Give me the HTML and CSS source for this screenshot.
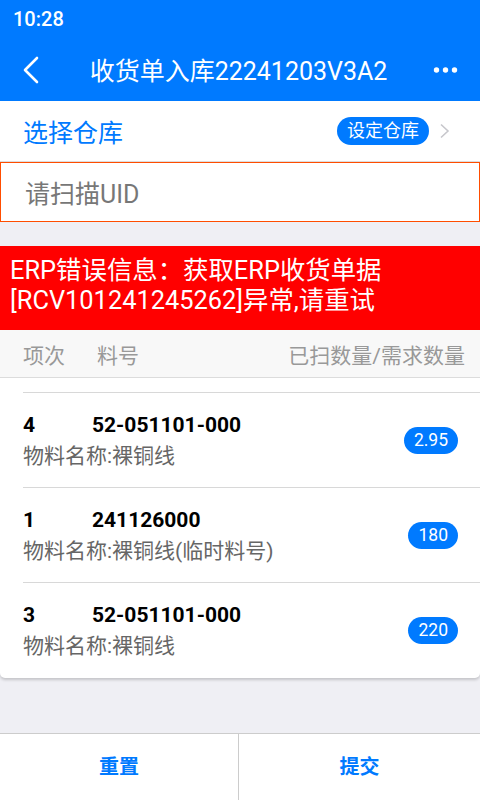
FILE: index.html
```html
<!DOCTYPE html>
<html lang="zh-CN">
<head>
  <meta charset="utf-8" />
  <meta name="viewport" content="width=device-width, initial-scale=1"/>
  <title>收货单入库</title>
  <link rel="stylesheet" href="styles.css">
</head>
<body>
  <div class="page">
    <!-- 顶部 -->
    <div class="header">
      <div class="status-bar">10:28</div>
      <div class="nav-bar">
        <svg class="nav-back" width="20" height="28" viewBox="0 0 20 28">
          <polyline points="15,2 3,14 15,26" fill="none" stroke="#fff" stroke-width="2.6" stroke-linecap="round" stroke-linejoin="round"/>
        </svg>
        <div class="nav-title">收货单入库22241203V3A2</div>
        <svg class="nav-more" width="28" height="8" viewBox="0 0 28 8">
          <circle cx="3.5" cy="4" r="2.7" fill="#fff"/>
          <circle cx="12.5" cy="4" r="2.7" fill="#fff"/>
          <circle cx="21.5" cy="4" r="2.7" fill="#fff"/>
        </svg>
      </div>
    </div>

    <!-- 仓库 -->
    <div class="warehouse-row">
      <span class="warehouse-label">选择仓库</span>
      <span class="warehouse-right">
        <span class="tag-btn">设定仓库</span>
        <svg width="12" height="16" viewBox="0 0 12 16">
          <polyline points="2,1.5 9,8 2,14.5" fill="none" stroke="#c7c7cc" stroke-width="1.6"/>
        </svg>
      </span>
    </div>

    <div class="scan-box">
      <span class="scan-placeholder">请扫描UID</span>
    </div>

    <div class="error-msg">ERP错误信息：获取ERP收货单据[RCV101241245262]异常,请重试</div>

    <!-- 列表 -->
    <div class="table-head">
      <span class="col-no">项次</span>
      <span class="col-code">料号</span>
      <span class="col-qty">已扫数量/需求数量</span>
    </div>

    <div class="list-card">
      <div class="item">
        <div class="item-info">
          <div class="item-line"><span class="item-no">4</span><span class="item-code">52-051101-000</span></div>
          <div class="item-name">物料名称:裸铜线</div>
        </div>
        <span class="qty-badge">2.95</span>
      </div>
      <div class="item">
        <div class="item-info">
          <div class="item-line"><span class="item-no">1</span><span class="item-code">241126000</span></div>
          <div class="item-name">物料名称:裸铜线(临时料号)</div>
        </div>
        <span class="qty-badge">180</span>
      </div>
      <div class="item">
        <div class="item-info">
          <div class="item-line"><span class="item-no">3</span><span class="item-code">52-051101-000</span></div>
          <div class="item-name">物料名称:裸铜线</div>
        </div>
        <span class="qty-badge">220</span>
      </div>
    </div>

    <div class="spacer"></div>

    <!-- 底部按钮 -->
    <div class="footer">
      <div class="footer-btn btn-reset">重置</div>
      <div class="footer-btn">提交</div>
    </div>
  </div>
</body>
</html>
```

FILE: styles.css
```css
* {
  box-sizing: border-box;
}
body {
  margin: 0;
  background-color: #efeff4;
  font-family: Roboto, "Noto Sans CJK SC", sans-serif;
}
.page {
  height: 800px;
  display: flex;
  flex-direction: column;
}

/* 顶部 */
.header {
  background-color: #007aff;
  color: #fff;
}
.status-bar {
  height: 36px;
  padding: 6px 0 0 13px;
  font-size: 20px;
  font-weight: 500;
  line-height: 26px;
}
.nav-bar {
  height: 65px;
  display: flex;
  align-items: center;
  padding: 0 19px 0 22px;
}
.nav-back {
  margin-top: 2px;
}
.nav-title {
  flex: 1;
  text-align: center;
  font-size: 25px;
  padding-left: 2px;
}
.nav-more {
  margin-top: 2px;
}

/* 仓库 */
.warehouse-row {
  height: 61px;
  background: #fff;
  border-bottom: 1px solid #ddd;
  display: flex;
  align-items: center;
  justify-content: space-between;
  padding: 0 29px 0 23px;
}
.warehouse-label {
  color: #007aff;
  font-size: 25px;
}
.warehouse-right {
  display: flex;
  align-items: center;
  gap: 10px;
}
.tag-btn {
  background: #007aff;
  color: #fff;
  font-size: 18px;
  line-height: 28px;
  height: 28px;
  padding: 0 10px;
  border-radius: 14px;
}
.scan-box {
  height: 60px;
  background: #fff;
  border: 1px solid #ff4d00;
  display: flex;
  align-items: center;
  padding-left: 24px;
}
.scan-placeholder {
  color: #777;
  font-size: 25px;
}
.error-msg {
  margin-top: 24px;
  background: #ff0000;
  color: #fff;
  font-size: 25.4px;
  line-height: 30px;
  height: 84px;
  padding: 9px 10px 0;
}

/* 列表 */
.table-head {
  height: 48px;
  background: #f8f8f8;
  border-bottom: 1px solid #ddd;
  display: flex;
  align-items: center;
  padding: 0 15px 0 23px;
  color: #999;
  font-size: 21px;
}
.col-no {
  width: 74px;
}
.col-code {
  flex: 1;
}
.list-card {
  background: #fff;
  padding-top: 14px;
  padding-bottom: 1px;
  border-radius: 0 0 5px 5px;
  box-shadow: 0 2px 3px rgba(0, 0, 0, 0.18);
}
.item {
  height: 95px;
  margin-left: 23px;
  border-top: 1px solid #d8d8d8;
  display: flex;
  align-items: center;
  padding: 0 22px 0 0;
}
.item-info {
  flex: 1;
}
.item-line {
  line-height: 30px;
  font-size: 21px;
  font-weight: bold;
  color: #000;
  margin-top: 1px;
}
.item-no {
  display: inline-block;
  width: 69px;
}
.item-name {
  line-height: 32px;
  font-size: 21px;
  color: #666;
}
.qty-badge {
  background: #007aff;
  color: #fff;
  font-size: 17.5px;
  height: 27px;
  line-height: 27px;
  padding: 0 10px;
  border-radius: 14px;
  min-width: 49px;
  text-align: center;
}
.spacer {
  flex: 1;
}

/* 底部按钮 */
.footer {
  height: 67px;
  display: flex;
  background: #fff;
  border-top: 1px solid #ccc;
}
.footer-btn {
  flex: 1;
  display: flex;
  align-items: center;
  justify-content: center;
  padding-bottom: 4px;
  color: #007aff;
  font-size: 20px;
  font-weight: bold;
}
.btn-reset {
  flex: 0 0 238px;
}
.footer-btn + .footer-btn {
  border-left: 1px solid #ccc;
}
```
